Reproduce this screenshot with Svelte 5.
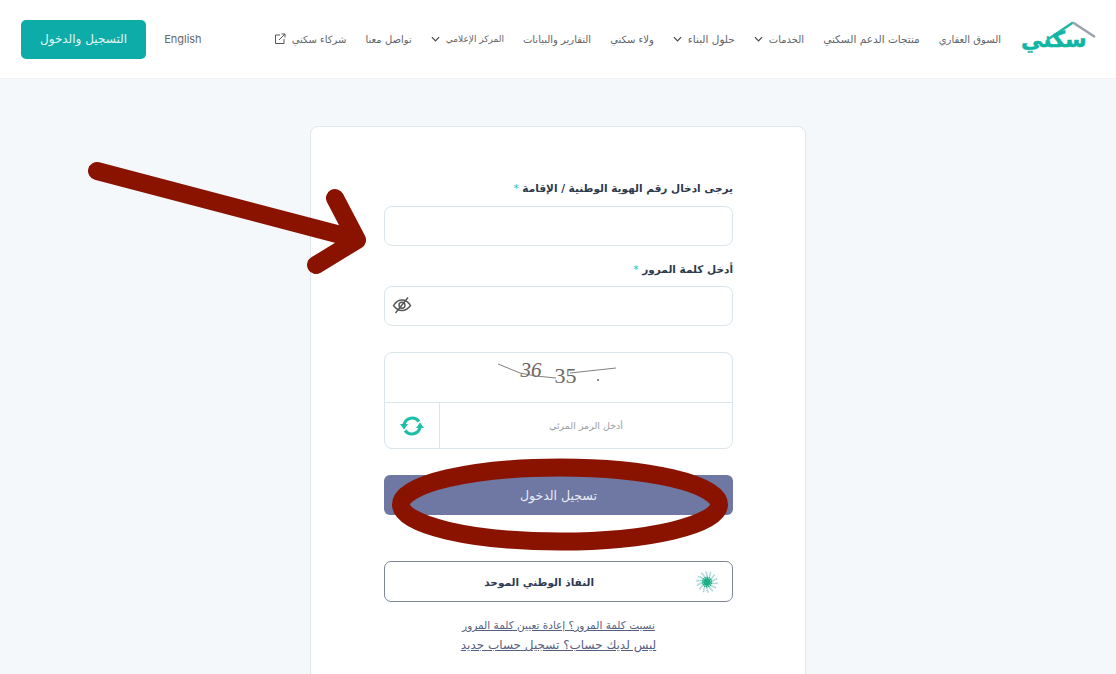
<script>
  const navItems = [
    { label: 'السوق العقاري' },
    { label: 'منتجات الدعم السكني', size: 'wide' },
    { label: 'الخدمات', caret: true },
    { label: 'حلول البناء', caret: true, size: 'wide' },
    { label: 'ولاء سكني' },
    { label: 'التقارير والبيانات' },
    { label: 'المركز الإعلامي', caret: true, size: 'tight' },
    { label: 'تواصل معنا' },
    { label: 'شركاء سكني', external: true }
  ];

  // rings of the nafath mark
  const dots = [];
  for (let r = 3; r <= 10; r += 1.75) {
    for (let i = 0; i < 14; i++) {
      const a = (i / 14) * Math.PI * 2 + r;
      dots.push({ x: 11 + Math.cos(a) * r, y: 11 + Math.sin(a) * r, r });
    }
  }
</script>

<div class="page" dir="rtl">
  <header class="topbar">
    <div class="logo">
      <svg class="roof" viewBox="0 0 76 23" aria-hidden="true">
        <path d="M27 22 L53 4.500" stroke="#1fb8a6" stroke-width="2.600" fill="none" />
        <path d="M53 4.500 L75 19" stroke="#9aa3ad" stroke-width="2.600" fill="none" />
      </svg>
      <span class="logo-text">سكني</span>
    </div>
    <nav class="nav">
      {#each navItems as item}
        <span class="nav-item {item.size ?? ''}">
          {item.label}
          {#if item.caret}
            <svg class="caret" viewBox="0 0 10 6" aria-hidden="true"><path d="M1 1l4 4 4-4" fill="none" stroke="#444" stroke-width="1.300" /></svg>
          {/if}
          {#if item.external}
            <svg class="ext" viewBox="0 0 12 12" aria-hidden="true">
              <path d="M6 2H1.500v8.500H10V6" fill="none" stroke="#555" stroke-width="1" />
              <path d="M5 7l6-6M7.500 1H11v3.500" fill="none" stroke="#555" stroke-width="1" />
            </svg>
          {/if}
        </span>
      {/each}
    </nav>
    <span class="lang" dir="ltr">English</span>
    <button class="register">التسجيل والدخول</button>
  </header>

  <main class="content">
    <section class="card">
      <label class="label" for="nid">يرجى ادخال رقم الهوية الوطنية / الإقامة <i>*</i></label>
      <input id="nid" class="field" type="text" />

      <label class="label second" for="pw">أدخل كلمة المرور <i>*</i></label>
      <div class="field pw">
        <svg class="eye" viewBox="0 0 20 20" aria-hidden="true">
          <path d="M1.500 10.500C4 6.500 7 5 10 5s6 1.500 8.500 5.500C16 14 13 15.500 10 15.500S4 14 1.500 10.500z" fill="none" stroke="#555" stroke-width="1.400" />
          <circle cx="10" cy="10.300" r="3" fill="none" stroke="#555" stroke-width="1.400" />
          <path d="M16 2.500L3.500 18" stroke="#555" stroke-width="1.400" />
        </svg>
      </div>

      <div class="captcha">
        <div class="captcha-image" dir="ltr">
          <svg class="captcha-lines" viewBox="0 0 130 30" aria-hidden="true">
            <path d="M2 4 L24 13 L40 16 L60 18 M74 13 L120 8" fill="none" stroke="#77706c" stroke-width="0.900" />
            <circle cx="102" cy="20" r="0.900" fill="#555" />
          </svg>
          <span class="cap-a">36</span><span class="cap-b">35</span>
        </div>
        <div class="captcha-row">
          <input class="captcha-input" type="text" placeholder="أدخل الرمز المرئي" />
          <div class="refresh">
            <svg viewBox="0 0 26 24" aria-hidden="true">
              <path d="M5 10.500A8.500 8.500 0 0 1 20 7.500" fill="none" stroke="#1dbfa8" stroke-width="3" />
              <path d="M21 13.500A8.500 8.500 0 0 1 6 16.500" fill="none" stroke="#1dbfa8" stroke-width="3" />
              <path d="M1 10h8l-4 5.500zM17 14h8l-4-5.500z" fill="#1dbfa8" />
            </svg>
          </div>
        </div>
      </div>

      <button class="login">تسجيل الدخول</button>

      <button class="nafath">
        <svg class="nafath-mark" viewBox="0 0 22 22" aria-hidden="true">
          {#each dots as d}
            <circle cx={d.x} cy={d.y} r="0.900" fill={d.r < 6 ? '#17b184' : '#a5d3d8'} />
          {/each}
          <circle cx="11" cy="11" r="3.500" fill="#1faf87" />
        </svg>
        <span>النفاذ الوطني الموحد</span>
      </button>

      <div class="links">
        <a href="#forgot">نسيت كلمة المرور؟ إعادة تعيين كلمة المرور</a>
        <a class="big" href="#new">ليس لديك حساب؟ تسجيل حساب جديد</a>
      </div>
    </section>
  </main>

  <svg class="marks" viewBox="0 0 1116 674" aria-hidden="true">
    <g fill="none" stroke="#8a1300" stroke-width="18" stroke-linecap="round" stroke-linejoin="round">
      <path d="M97 171L356 239" />
      <path d="M335 198L357 240L316 265" />
      <ellipse cx="560" cy="504.500" rx="159" ry="37" />
    </g>
  </svg>
</div>

<style>
  :global(body) {
    margin: 0;
    background: #f5f8fb;
    overflow: hidden;
  }
  .page {
    position: relative;
    height: 674px;
    overflow: hidden;
    font-family: "DejaVu Sans", "Noto Sans", sans-serif;
    color: #555;
  }
  .topbar {
    height: 79px;
    box-sizing: border-box;
    background: #fff;
    border-bottom: 1px solid #f0f2f4;
    display: flex;
    align-items: center;
    padding: 0 20px 0 21px;
  }
  .logo {
    position: relative;
    width: 76px;
    height: 42px;
    flex: none;
  }
  .roof {
    position: absolute;
    top: 0;
    right: 0;
    width: 76px;
    height: 23px;
  }
  .logo-text {
    position: absolute;
    top: 2px;
    left: 1px;
    font-size: 22px;
    font-weight: 700;
    line-height: 40px;
    color: #12b5a5;
    -webkit-text-stroke: 0.5px #12b5a5;
  }
  .nav {
    display: flex;
    align-items: center;
    gap: 19px;
    margin-right: 19px;
    flex: none;
  }
  .nav-item {
    display: flex;
    align-items: center;
    gap: 6px;
    font-size: 10px;
    white-space: nowrap;
    color: #5f6468;
  }
  .nav-item.wide {
    font-size: 10.500px;
  }
  .nav-item.tight {
    font-size: 9px;
  }
  .caret {
    width: 9px;
    height: 6px;
  }
  .ext {
    width: 12px;
    height: 12px;
  }
  .lang {
    margin-right: 72px;
    font-family: "Inter", sans-serif;
    font-size: 11px;
    color: #66696c;
  }
  .register {
    margin-right: auto;
    width: 125px;
    height: 39px;
    border: 0;
    border-radius: 5px;
    background: #0eaca9;
    color: #e4f6f4;
    font: 12px "DejaVu Sans", sans-serif;
  }
  .content {
    display: flex;
    justify-content: center;
    padding-top: 47px;
  }
  .card {
    width: 496px;
    height: 600px;
    box-sizing: border-box;
    padding: 52px 72px 0 73px;
    background: #fff;
    border: 1px solid #dfe7ee;
    border-radius: 8px;
    display: flex;
    flex-direction: column;
  }
  .label {
    font-size: 10.500px;
    line-height: 18px;
    height: 18px;
    margin-bottom: 9px;
    font-weight: 700;
    color: #2e3a4a;
  }
  .label i {
    color: #27c2b0;
    font-style: normal;
    font-weight: 400;
  }
  .label.second {
    margin-top: 14px;
    margin-bottom: 8px;
  }
  .field {
    display: block;
    width: 100%;
    height: 40px;
    box-sizing: border-box;
    padding: 0;
    background: #fff;
    border: 1px solid #dbe5ec;
    border-radius: 8px;
    outline: none;
  }
  .pw {
    display: flex;
    align-items: center;
    justify-content: flex-end;
    padding-left: 7px;
    padding-bottom: 3px;
  }
  .eye {
    width: 20px;
    height: 20px;
  }
  .captcha {
    height: 97px;
    box-sizing: border-box;
    margin-top: 26px;
    border: 1px solid #dbe5ec;
    border-radius: 8px;
    display: flex;
    flex-direction: column;
  }
  .captcha-image {
    position: relative;
    height: 50px;
    flex: none;
    display: flex;
    justify-content: center;
    align-items: flex-start;
    gap: 13px;
    padding-top: 6px;
    box-sizing: border-box;
    border-bottom: 1px solid #dbe5ec;
    font-family: "Liberation Serif", serif;
    color: #6d6763;
  }
  .captcha-lines {
    position: absolute;
    top: 7px;
    left: 111px;
    width: 130px;
    height: 30px;
  }
  .cap-a {
    font-size: 21px;
    font-style: italic;
    line-height: 22px;
    margin-left: -20px;
  }
  .cap-b {
    font-size: 22px;
    line-height: 34px;
  }
  .captcha-row {
    flex: 1;
    display: flex;
  }
  .captcha-input {
    flex: 1;
    min-width: 0;
    border: 0;
    outline: none;
    background: none;
    text-align: center;
    font: 9.500px "DejaVu Sans", sans-serif;
    border-radius: 0 0 8px 0;
  }
  .captcha-input::placeholder {
    color: #9a9ea2;
  }
  .refresh {
    width: 54px;
    flex: none;
    border-right: 1px solid #dbe5ec;
    display: flex;
    align-items: center;
    justify-content: center;
  }
  .refresh svg {
    width: 26px;
    height: 24px;
  }
  .login {
    height: 40px;
    margin-top: 26px;
    border: 0;
    border-radius: 6px;
    background: #6e78a3;
    color: #e9ebf3;
    font: 12.500px "DejaVu Sans", sans-serif;
  }
  .nafath {
    height: 41px;
    margin-top: 46px;
    padding: 0 14px;
    background: #fff;
    border: 1px solid #7d8492;
    border-radius: 7px;
    display: flex;
    align-items: center;
    color: #2f3a55;
    font: 700 10.500px "DejaVu Sans", sans-serif;
  }
  .nafath span {
    margin-right: 102px;
  }
  .nafath-mark {
    width: 22px;
    height: 22px;
  }
  .links {
    margin-top: 14px;
    display: flex;
    flex-direction: column;
    align-items: center;
    gap: 2px;
    font-size: 10.500px;
    line-height: 18px;
  }
  .links a {
    color: #555f80;
  }
  .links a.big {
    font-size: 12px;
  }
  .marks {
    position: absolute;
    inset: 0;
    width: 1116px;
    height: 674px;
    pointer-events: none;
  }
</style>
